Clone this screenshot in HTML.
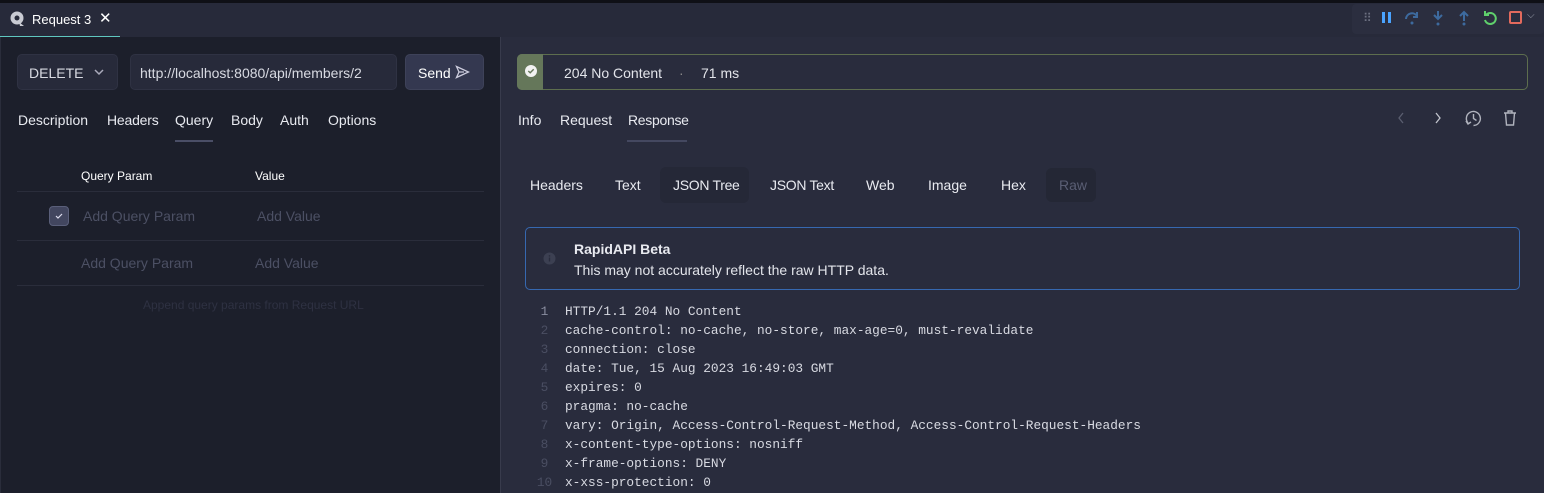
<!DOCTYPE html>
<html><head><meta charset="utf-8"><style>
*{box-sizing:border-box;margin:0;padding:0}
body{width:1544px;height:493px;overflow:hidden;background:#292c3d;font-family:"Liberation Sans",sans-serif;font-size:14px;color:#e4e6ee;position:relative}
.a{position:absolute;white-space:nowrap}
.mono{font-family:"Liberation Mono",monospace;font-size:12.8px}
.t{top:112px !important}
.n{display:inline-block;width:41px;text-align:center;color:#4a4e62}
</style></head><body>
<div class="a" style="left:0;top:0;width:1544px;height:3px;background:#0f1016"></div>
<div class="a" style="left:0;top:3px;width:1544px;height:34px;background:#272a3a"></div>
<div class="a" style="left:0;top:36px;width:120px;height:2px;background:#5fc7c0"></div>
<svg class="a" style="left:10px;top:11px" width="15" height="16" viewBox="0 0 15 16"><circle cx="7" cy="7" r="6.5" fill="#c9cbd3"/><circle cx="7" cy="7" r="2.5" fill="#272a3a"/><path d="M9 11 L14 15 L10 15 Z" fill="#c9cbd3"/></svg>
<div class="a" style="left:32px;top:12px;font-size:13px;color:#fff">Request 3</div>
<div class="a" style="left:99px;top:9px;font-size:15px;color:#fff">✕</div>
<div class="a" style="left:1352px;top:4px;width:192px;height:30px;background:#2b2e3f;border-radius:4px"></div>
<div class="a" style="left:1363px;top:11px;color:#6c7080;font-size:12px;letter-spacing:-1px">⠿</div>
<div class="a" style="left:1382px;top:12px;width:3px;height:11px;background:#4aa3ff"></div>
<div class="a" style="left:1388px;top:12px;width:3px;height:11px;background:#4aa3ff"></div>
<svg class="a" style="left:1403px;top:9px" width="18" height="18" viewBox="0 0 18 18" fill="none" stroke="#3d6a9e" stroke-width="2"><path d="M3 10 A6 6 0 0 1 14 7"/><path d="M14 3 V8 H10"/><circle cx="9" cy="14" r="1.5" fill="#3d6a9e" stroke="none"/></svg>
<svg class="a" style="left:1429px;top:9px" width="18" height="18" viewBox="0 0 18 18" fill="none" stroke="#3d6a9e" stroke-width="2"><path d="M9 2 V10 M5 6 L9 10 L13 6"/><circle cx="9" cy="15" r="1.5" fill="#3d6a9e" stroke="none"/></svg>
<svg class="a" style="left:1455px;top:9px" width="18" height="18" viewBox="0 0 18 18" fill="none" stroke="#3d6a9e" stroke-width="2"><path d="M9 12 V3 M5 7 L9 3 L13 7"/><circle cx="9" cy="15" r="1.5" fill="#3d6a9e" stroke="none"/></svg>
<svg class="a" style="left:1481px;top:9px" width="18" height="18" viewBox="0 0 18 18" fill="none" stroke="#5fd06c" stroke-width="2"><path d="M5 6 A5.5 5.5 0 1 1 4 11"/><path d="M4 2 V6 H8"/></svg>
<div class="a" style="left:1509px;top:11px;width:13px;height:13px;border:2px solid #e36a5d;border-radius:2px"></div>
<div class="a" style="left:1527px;top:10px;color:#9a9eab;font-size:10px">⌵</div>
<div class="a" style="left:0;top:37px;width:500px;height:456px;background:#1c1f2b;border-left:1px solid #2a2d3b"></div>
<div class="a" style="left:500px;top:37px;width:1px;height:456px;background:#383b4c"></div>
<div class="a" style="left:17px;top:54px;width:101px;height:36px;background:#272a3a;border:1px solid #2f3243;border-radius:5px"></div>
<div class="a" style="left:29px;top:65px;color:#d8dae2">DELETE</div>
<svg class="a" style="left:93px;top:68px" width="12" height="8" viewBox="0 0 12 8" fill="none" stroke="#aab" stroke-width="1.5"><path d="M2 2 L6 6 L10 2"/></svg>
<div class="a" style="left:130px;top:54px;width:267px;height:36px;background:#272a3a;border:1px solid #2f3243;border-radius:5px"></div>
<div class="a" style="left:140px;top:65px;color:#d8dae2">http://localhost:8080/api/members/2</div>
<div class="a" style="left:405px;top:54px;width:79px;height:36px;background:#343850;border:1px solid #3e4259;border-radius:5px"></div>
<div class="a" style="left:418px;top:65px;color:#fff">Send</div>
<svg class="a" style="left:455px;top:65px" width="15" height="14" viewBox="0 0 15 14" fill="none" stroke="#ccd" stroke-width="1.3"><path d="M1.5 1.5 L13.5 7 L1.5 12.5 L4 7 Z M4 7 H9"/></svg>
<div class="a t" style="left:18px;color:#e8eaf0">Description</div>
<div class="a t" style="left:107px;color:#e8eaf0;letter-spacing:-0.2px">Headers</div>
<div class="a t" style="left:175px;color:#e8eaf0">Query</div>
<div class="a t" style="left:231px;color:#e8eaf0">Body</div>
<div class="a t" style="left:280px;color:#e8eaf0">Auth</div>
<div class="a t" style="left:328px;color:#e8eaf0">Options</div>
<div class="a" style="left:175px;top:140px;width:38px;height:2px;background:#4a4e66"></div>
<div class="a" style="left:81px;top:169px;font-size:12px;color:#fff">Query Param</div>
<div class="a" style="left:255px;top:169px;font-size:12px;color:#fff">Value</div>
<div class="a" style="left:17px;top:191px;width:467px;height:1px;background:#2a2d3b"></div>
<div class="a" style="left:49px;top:206px;width:20px;height:20px;background:#42465f;border:1px solid #5a5f7a;border-radius:4px"></div>
<svg class="a" style="left:54px;top:211px" width="10" height="10" viewBox="0 0 10 10" fill="none" stroke="#dde" stroke-width="1.2"><path d="M2 5 L4 7 L8 3"/></svg>
<div class="a" style="left:83px;top:208px;color:#4c5064">Add Query Param</div>
<div class="a" style="left:257px;top:208px;color:#4c5064">Add Value</div>
<div class="a" style="left:17px;top:240px;width:467px;height:1px;background:#2a2d3b"></div>
<div class="a" style="left:81px;top:255px;color:#4c5064">Add Query Param</div>
<div class="a" style="left:255px;top:255px;color:#4c5064">Add Value</div>
<div class="a" style="left:17px;top:285px;width:467px;height:1px;background:#2a2d3b"></div>
<div class="a" style="left:143px;top:298px;font-size:12px;color:#2e3142">Append query params from Request URL</div>
<div class="a" style="left:517px;top:54px;width:1011px;height:36px;border:1px solid #5d6e4e;border-radius:5px"></div>
<div class="a" style="left:517px;top:54px;width:26px;height:36px;background:#65775a;border-radius:5px 0 0 5px"></div>
<svg class="a" style="left:524px;top:64px" width="14" height="14" viewBox="0 0 14 14"><circle cx="7" cy="7" r="6" fill="#f2f2f2"/><path d="M4.3 7 L6.2 8.8 L9.7 5.3" fill="none" stroke="#65775a" stroke-width="1.4"/></svg>
<div class="a" style="left:564px;top:65px;color:#e2e4ea">204 No Content</div>
<div class="a" style="left:679px;top:65px;color:#888">·</div>
<div class="a" style="left:701px;top:65px;color:#e2e4ea">71 ms</div>
<div class="a t" style="left:518px;color:#e8eaf0">Info</div>
<div class="a t" style="left:560px;color:#e8eaf0">Request</div>
<div class="a t" style="left:628px;color:#e8eaf0;letter-spacing:-0.3px">Response</div>
<div class="a" style="left:627px;top:140px;width:60px;height:2px;background:#444860"></div>
<svg class="a" style="left:1396px;top:111px" width="10" height="14" viewBox="0 0 10 14" fill="none" stroke="#5a5e70" stroke-width="1.3"><path d="M7 2 L3 7 L7 12"/></svg>
<svg class="a" style="left:1433px;top:111px" width="10" height="14" viewBox="0 0 10 14" fill="none" stroke="#c0c3cc" stroke-width="1.3"><path d="M3 2 L7 7 L3 12"/></svg>
<svg class="a" style="left:1464px;top:109px" width="19" height="19" viewBox="0 0 19 19" fill="none" stroke="#b0b3bd" stroke-width="1.4"><path d="M4 14 A7 7 0 1 1 9.5 16.5"/><path d="M9.5 5 V9.5 L12.5 11.5"/><path d="M2 12 L4 15 L7 13"/></svg>
<svg class="a" style="left:1502px;top:109px" width="16" height="18" viewBox="0 0 16 18" fill="none" stroke="#b0b3bd" stroke-width="1.4"><path d="M2 4 H14 M6 4 V2 H10 V4 M3.5 4 L4.5 16 H11.5 L12.5 4"/></svg>
<div class="a" style="left:530px;top:177px;color:#e8eaf0">Headers</div>
<div class="a" style="left:615px;top:177px;color:#e8eaf0">Text</div>
<div class="a" style="left:660px;top:167px;width:89px;height:36px;background:#252837;border-radius:6px"></div>
<div class="a" style="left:673px;top:177px;color:#e8eaf0;letter-spacing:-0.3px">JSON Tree</div>
<div class="a" style="left:770px;top:177px;color:#e8eaf0;letter-spacing:-0.3px">JSON Text</div>
<div class="a" style="left:866px;top:177px;color:#e8eaf0">Web</div>
<div class="a" style="left:928px;top:177px;color:#e8eaf0">Image</div>
<div class="a" style="left:1001px;top:177px;color:#e8eaf0">Hex</div>
<div class="a" style="left:1046px;top:168px;width:50px;height:34px;background:#242735;border-radius:6px"></div>
<div class="a" style="left:1059px;top:177px;color:#5a5e74">Raw</div>
<div class="a" style="left:525px;top:227px;width:995px;height:63px;border:1px solid #3668b0;border-radius:5px"></div>
<svg class="a" style="left:543px;top:252px" width="13" height="13" viewBox="0 0 13 13"><circle cx="6.5" cy="6.5" r="6" fill="#3c4052"/><rect x="5.8" y="5.5" width="1.4" height="4" fill="#292c3d"/><rect x="5.8" y="3.2" width="1.4" height="1.4" fill="#292c3d"/></svg>
<div class="a" style="left:574px;top:241px;color:#e8eaf0;font-weight:bold">RapidAPI Beta</div>
<div class="a" style="left:574px;top:262px;color:#e2e4ea">This may not accurately reflect the raw HTTP data.</div>
<div class="a mono" style="left:524px;top:302px;line-height:19px;color:#d8dae2">
<div><span class="n" style="color:#8a8ea0">1</span>HTTP/1.1 204 No Content</div>
<div><span class="n">2</span>cache-control: no-cache, no-store, max-age=0, must-revalidate</div>
<div><span class="n">3</span>connection: close</div>
<div><span class="n">4</span>date: Tue, 15 Aug 2023 16:49:03 GMT</div>
<div><span class="n">5</span>expires: 0</div>
<div><span class="n">6</span>pragma: no-cache</div>
<div><span class="n">7</span>vary: Origin, Access-Control-Request-Method, Access-Control-Request-Headers</div>
<div><span class="n">8</span>x-content-type-options: nosniff</div>
<div><span class="n">9</span>x-frame-options: DENY</div>
<div><span class="n">10</span>x-xss-protection: 0</div>
</div>
</body></html>
